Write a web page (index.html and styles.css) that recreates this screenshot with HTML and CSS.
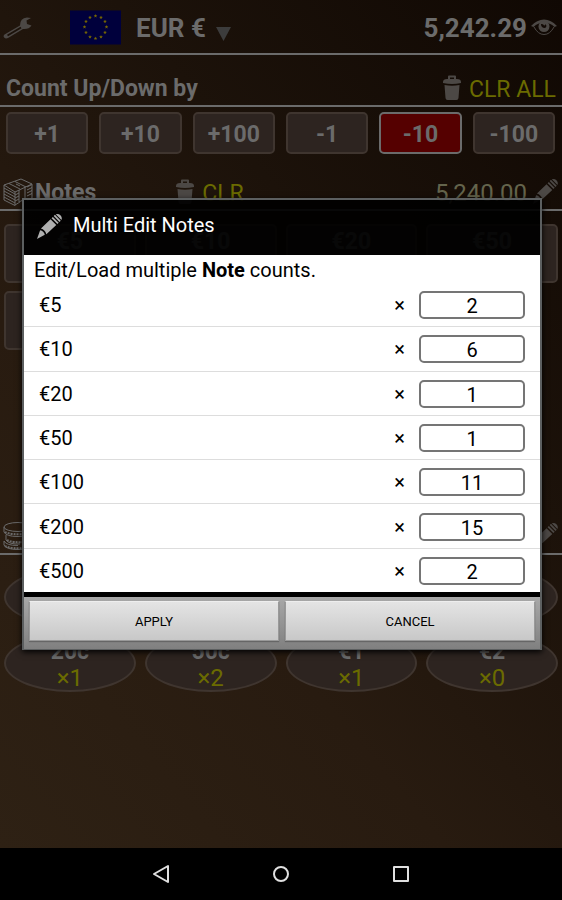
FILE: index.html
```
<!DOCTYPE html>
<html lang="en">
<head>
  <meta charset="UTF-8" />
  <meta name="viewport" content="width=device-width, initial-scale=1" />
  <title>Cash Counter</title>
  <link rel="stylesheet" href="styles.css">
</head>
<body>

<!-- shared icons -->
<svg class="sprite" aria-hidden="true">
  <symbol id="trash" viewBox="0 0 18 25">
    <path d="M5 5V1.500q0-1 1-1h6q1 0 1 1V5h-2V2.500H7V5z"/>
    <path d="M0 7q0-3 4-3h10q4 0 4 3v1q-9 2-18 0z"/>
    <path d="M1.500 10q7.500 1.500 15 0L15.500 23q-.2 2-2 2h-9q-1.800 0-2-2z"/>
  </symbol>
  <symbol id="pencil" viewBox="0 0 24 24">
    <path d="M0 24L3 15.500Q6.500 16 7.500 20z"/>
    <path d="M3.800 14L13 5l5.500 5.500L9 19.500Q7.500 15 3.800 14z"/>
    <path d="M14 4l1.200-1.200 5.600 5.600-1.200 1.200z"/>
    <path d="M16 2l1.200-1.200 5.600 5.600-1.200 1.200z"/>
    <path d="M18 .3Q20.500-.6 22.500 1.300T23.500 5.700z"/>
  </symbol>
  <symbol id="star" viewBox="-5 -5 10 10">
    <path d="M0-5L1.200-1.600 4.800-1.500 1.900.6 2.900 4 0 2-2.900 4-1.900.6-4.800-1.500-1.200-1.600z"/>
  </symbol>
</svg>

<div class="app">
  <header class="topbar">
    <button class="icon-btn" aria-label="Settings">
      <svg class="wrench" viewBox="0 0 30 24">
        <path d="M1.500 18.500L17 9.500Q17 2 24 1.500L28 2 23.500 4.500 24 8 28.500 9.500Q26 13.500 20 13L5 22Q2.500 23 1.200 21.500T1.500 18.500z"/>
        <path class="line" d="M4.500 19.500L18 11.500"/>
      </svg>
    </button>
    <button class="currency">
      <svg class="flag" viewBox="0 0 51 34">
        <rect width="51" height="34"/>
        <use href="#star" x="23.500" y="3.500" width="4" height="4"/>
        <use href="#star" x="29" y="5" width="4" height="4"/>
        <use href="#star" x="33" y="9" width="4" height="4"/>
        <use href="#star" x="34.500" y="14.500" width="4" height="4"/>
        <use href="#star" x="33" y="20" width="4" height="4"/>
        <use href="#star" x="29" y="24.500" width="4" height="4"/>
        <use href="#star" x="23.500" y="26" width="4" height="4"/>
        <use href="#star" x="18" y="24.500" width="4" height="4"/>
        <use href="#star" x="14" y="20" width="4" height="4"/>
        <use href="#star" x="12.500" y="14.500" width="4" height="4"/>
        <use href="#star" x="14" y="9" width="4" height="4"/>
        <use href="#star" x="18" y="5" width="4" height="4"/>
      </svg>
      <span>EUR €</span>
      <svg class="arrow" viewBox="0 0 15 14"><path d="M0 0h15L7.500 14z"/></svg>
    </button>
    <span class="total">5,242.29</span>
    <button class="icon-btn" aria-label="Show total">
      <svg class="eye" viewBox="0 0 26 17">
        <path d="M0 7Q6 .5 13 .5T26 7L23.500 8Q19 3.500 13 3.500T2.500 8z"/>
        <path class="line" d="M3 8Q7 15.500 13 15.500T23 8"/>
        <circle cx="13" cy="7.500" r="5.500"/>
        <path class="glint" d="M10 5q2.500-.5 3 1.500 1.500 0 1.500-1.500 2 2.500-.5 4-4 0-4-4z"/>
      </svg>
    </button>
  </header>

  <section>
    <div class="head">
      <h2>Count Up/Down by</h2>
      <button class="clear"><svg class="trash"><use href="#trash"/></svg>CLR ALL</button>
    </div>
    <div class="steps">
      <button>+1</button>
      <button>+10</button>
      <button>+100</button>
      <button>-1</button>
      <button class="active">-10</button>
      <button>-100</button>
    </div>
  </section>

  <section class="notes">
    <div class="head">
      <svg class="stack" viewBox="0 0 30 28">
        <path d="M1 7L18 1l11 5-17 8zM1 7v15l11 5.500V14M29 6v14l-5 2.500M1 10l11 6M1 13l11 6M1 16l11 6M1 19l11 6M12 17l4-2M12 20l4-2M12 23l4-2M12 27l5-3M24 9l5-2.500M24 12l5-2.500M24 15l5-2.500M24 18l5-2.500M16 12v12l6-3V9.500M6 5.500l11 5.500M12 3.500l11 5.500M13 6l4 2"/>
      </svg>
      <h2>Notes</h2>
      <button class="clear"><svg class="trash"><use href="#trash"/></svg>CLR</button>
      <span class="sum">5,240.00</span>
      <button class="icon-btn" aria-label="Edit notes"><svg class="pencil"><use href="#pencil"/></svg></button>
    </div>
    <div class="tiles">
      <button>€5</button>
      <button>€10</button>
      <button>€20</button>
      <button>€50</button>
      <button aria-label="€100"></button>
      <button aria-label="€200"></button>
      <button aria-label="€500"></button>
    </div>
  </section>

  <section class="coins" aria-label="Coins">
    <div class="head">
      <svg class="stack" viewBox="0 0 30 30">
        <ellipse cx="15" cy="6" rx="14" ry="4.500"/>
        <path d="M1 6v5q2 4.500 14 4.500T29 11V6M3 14v5q3 4.500 14 4M1 20v4q2 4.500 14 4.500T29 24v-4M1 20q2 4.500 14 4.500"/>
        <path class="ridges" d="M2 11q5 3 24 2M4 19q5 3 22 2M2 25q5 3 24 2"/>
      </svg>
      <button class="icon-btn" aria-label="Edit coins"><svg class="pencil"><use href="#pencil"/></svg></button>
    </div>
    <div class="tiles round">
      <button aria-label="1c"></button>
      <button aria-label="2c"></button>
      <button aria-label="5c"></button>
      <button aria-label="10c"></button>
      <button>20c<span>×1</span></button>
      <button>50c<span>×2</span></button>
      <button>€1<span>×1</span></button>
      <button>€2<span>×0</span></button>
    </div>
  </section>
</div>

<nav class="navbar">
  <button aria-label="Back"><svg viewBox="0 0 20 20"><path d="M17 2v16L3 10z"/></svg></button>
  <button aria-label="Home"><svg viewBox="0 0 20 20"><circle cx="10" cy="10" r="7"/></svg></button>
  <button aria-label="Recent apps"><svg viewBox="0 0 20 20"><rect x="3" y="3" width="14" height="14"/></svg></button>
</nav>

<div class="overlay">
  <form class="dialog" role="dialog" aria-labelledby="dialog-title">
    <div class="dialog-title">
      <svg class="pencil"><use href="#pencil"/></svg>
      <h1 id="dialog-title">Multi Edit Notes</h1>
    </div>
    <div class="dialog-body">
      <p>Edit/Load multiple <b>Note</b> counts.</p>
      <div class="rows">
        <div class="row"><label for="n5">€5</label><span>×</span><input id="n5" type="text" inputmode="numeric" value="2"></div>
        <div class="row"><label for="n10">€10</label><span>×</span><input id="n10" type="text" inputmode="numeric" value="6"></div>
        <div class="row"><label for="n20">€20</label><span>×</span><input id="n20" type="text" inputmode="numeric" value="1"></div>
        <div class="row"><label for="n50">€50</label><span>×</span><input id="n50" type="text" inputmode="numeric" value="1"></div>
        <div class="row"><label for="n100">€100</label><span>×</span><input id="n100" type="text" inputmode="numeric" value="11"></div>
        <div class="row"><label for="n200">€200</label><span>×</span><input id="n200" type="text" inputmode="numeric" value="15"></div>
        <div class="row"><label for="n500">€500</label><span>×</span><input id="n500" type="text" inputmode="numeric" value="2"></div>
      </div>
    </div>
    <div class="dialog-buttons">
      <button type="button">APPLY</button>
      <button type="button">CANCEL</button>
    </div>
  </form>
</div>

</body>
</html>
```
FILE: styles.css
```
* {
  box-sizing: border-box;
}
body {
  font-family: Roboto, "Liberation Sans", sans-serif;
  margin: 0;
  min-height: 100vh;
  display: flex;
  flex-direction: column;
  position: relative;
  background: #000;
  color: #6b6b6b;
}
button, input {
  font-family: inherit;
  color: inherit;
}
button {
  background: none;
  border: 0;
  padding: 0;
}
h1, h2, p {
  margin: 0;
}
svg {
  display: block;
  fill: #4c4845;
}
.sprite {
  position: absolute;
  width: 0;
  height: 0;
}

/* main screen */
.app {
  flex: 1;
  background: linear-gradient(50deg, #2e2114 0%, #281b10 35%, #1c120a 65%, #100803 100%);
}
.topbar, .head {
  display: flex;
  align-items: center;
  border-bottom: 2px solid #6b6b6b;
}
.topbar {
  height: 55px;
  padding: 2px 5px 0 3px;
  font-size: 26px;
  font-weight: bold;
}
.wrench {
  width: 30px;
  height: 24px;
}
.wrench .line {
  stroke: #1c120a;
  stroke-width: 2;
}
.currency {
  display: flex;
  align-items: center;
  margin-left: 37px;
  font-size: 26px;
  font-weight: bold;
}
.flag {
  width: 51px;
  height: 35px;
  margin-right: 15px;
  fill: #7a6a00;
}
.flag rect {
  fill: #00003c;
}
.arrow {
  width: 15px;
  height: 14px;
  margin: 13px 0 0 10px;
  fill: #3c3c3c;
}
.total {
  margin-left: auto;
}
.eye {
  width: 26px;
  height: 17px;
  margin-left: 4px;
}
.eye .line {
  fill: none;
  stroke: #4c4845;
  stroke-width: 1;
}
.eye .glint {
  fill: #120904;
}
.head {
  height: 52px;
  padding: 18px 6px 0;
}
.head h2 {
  font-size: 23px;
  line-height: 32px;
}
.clear {
  display: flex;
  align-items: center;
  gap: 8px;
  margin-left: auto;
  font-size: 23px;
  color: #6b6b00;
}
.trash {
  width: 18px;
  height: 25px;
  margin-bottom: 3px;
}
.pencil {
  width: 25px;
  height: 25px;
}
.steps {
  display: grid;
  grid-template-columns: repeat(6, 1fr);
  gap: 11px;
  padding: 5px 7px 5px 6px;
}
.steps button, .tiles button {
  background: #2d2420;
  border: 2px solid #3f352f;
  border-radius: 5px;
  font-size: 23px;
  font-weight: bold;
}
.steps button {
  height: 42px;
  padding-top: 2px;
}
.steps .active {
  background: #550000;
  border-color: #6b6b6b;
}
.notes .head, .coins .head {
  padding: 18px 4px 0 3px;
}
.stack {
  width: 30px;
  height: 30px;
  margin: 0 2px 2px 0;
  fill: none;
  stroke: #6b6b6b;
  stroke-width: 1;
}
.stack .ridges {
  stroke-width: 2;
  stroke-dasharray: 2 1;
}
.notes .clear {
  margin-left: 80px;
}
.sum {
  margin-left: auto;
  font-size: 24px;
  color: #64644c;
}
.head .icon-btn {
  margin: 0 0 3px 6px;
}
.coins .icon-btn {
  margin-left: auto;
}
.tiles {
  display: grid;
  grid-template-columns: repeat(4, 1fr);
  gap: 8px 9px;
  padding: 13px 4px 0;
}
.tiles button {
  display: flex;
  flex-direction: column;
  align-items: center;
  height: 59px;
  padding-top: 2px;
  line-height: 27px;
}
.tiles span {
  font-size: 24px;
  font-weight: normal;
  color: #6b6b00;
}
.notes .tiles {
  min-height: 292px;
  align-content: start;
}
.round button {
  height: 58px;
  border-radius: 50%;
}

/* system navigation */
.navbar {
  display: flex;
  justify-content: center;
  gap: 100px;
  height: 52px;
}
.navbar button {
  display: flex;
  align-items: center;
}
.navbar svg {
  width: 20px;
  height: 20px;
  fill: none;
  stroke: #e0e0e0;
  stroke-width: 2;
  stroke-linejoin: round;
}

/* dialog */
.overlay {
  position: absolute;
  inset: 0;
  display: flex;
  justify-content: center;
  align-items: flex-start;
  padding: 198px 20px 0 22px;
}
.dialog {
  flex: 1;
  border: 2px solid #5c5f60;
  border-bottom-width: 1px;
  box-shadow: 0 2px 6px #000;
  color: #000;
}
.dialog-title {
  display: flex;
  align-items: center;
  gap: 11px;
  height: 55px;
  padding: 0 13px 6px;
  background: rgba(0, 0, 0, 0.92);
}
.dialog-title h1 {
  font-size: 20px;
  font-weight: normal;
  color: #fff;
}
.dialog-title svg {
  margin-top: 3px;
  fill: #b0b0b0;
}
.dialog-body {
  background: #fff;
  border-bottom: 5px solid #000;
  font-size: 20px;
}
.dialog-body p {
  padding: 3px 10px 0;
  line-height: 25px;
}
.rows {
  display: flex;
  flex-direction: column;
  height: 309px;
}
.row {
  flex: 1;
  display: flex;
  align-items: center;
  padding: 1px 15px 0;
  border-bottom: 1px solid #ddd;
}
.row:last-child {
  border-bottom: 0;
}
.row label {
  flex: 1;
}
.row input {
  width: 106px;
  height: 28px;
  margin-left: 14px;
  padding: 2px 0 0;
  border: 2px solid #757575;
  border-radius: 5px;
  background: #fff;
  font-size: 20px;
  text-align: center;
}
.dialog-buttons {
  display: flex;
  gap: 6px;
  padding: 4px 5px 8px;
  background: linear-gradient(#a8a8a8, #808080);
}
.dialog-buttons button {
  flex: 1;
  height: 40px;
  border: 1px solid #999;
  border-top-color: #eee;
  background: linear-gradient(#e4e4e4, #c8c8c8);
  box-shadow: 0 1px 1px #666;
  font-size: 13px;
}
```
